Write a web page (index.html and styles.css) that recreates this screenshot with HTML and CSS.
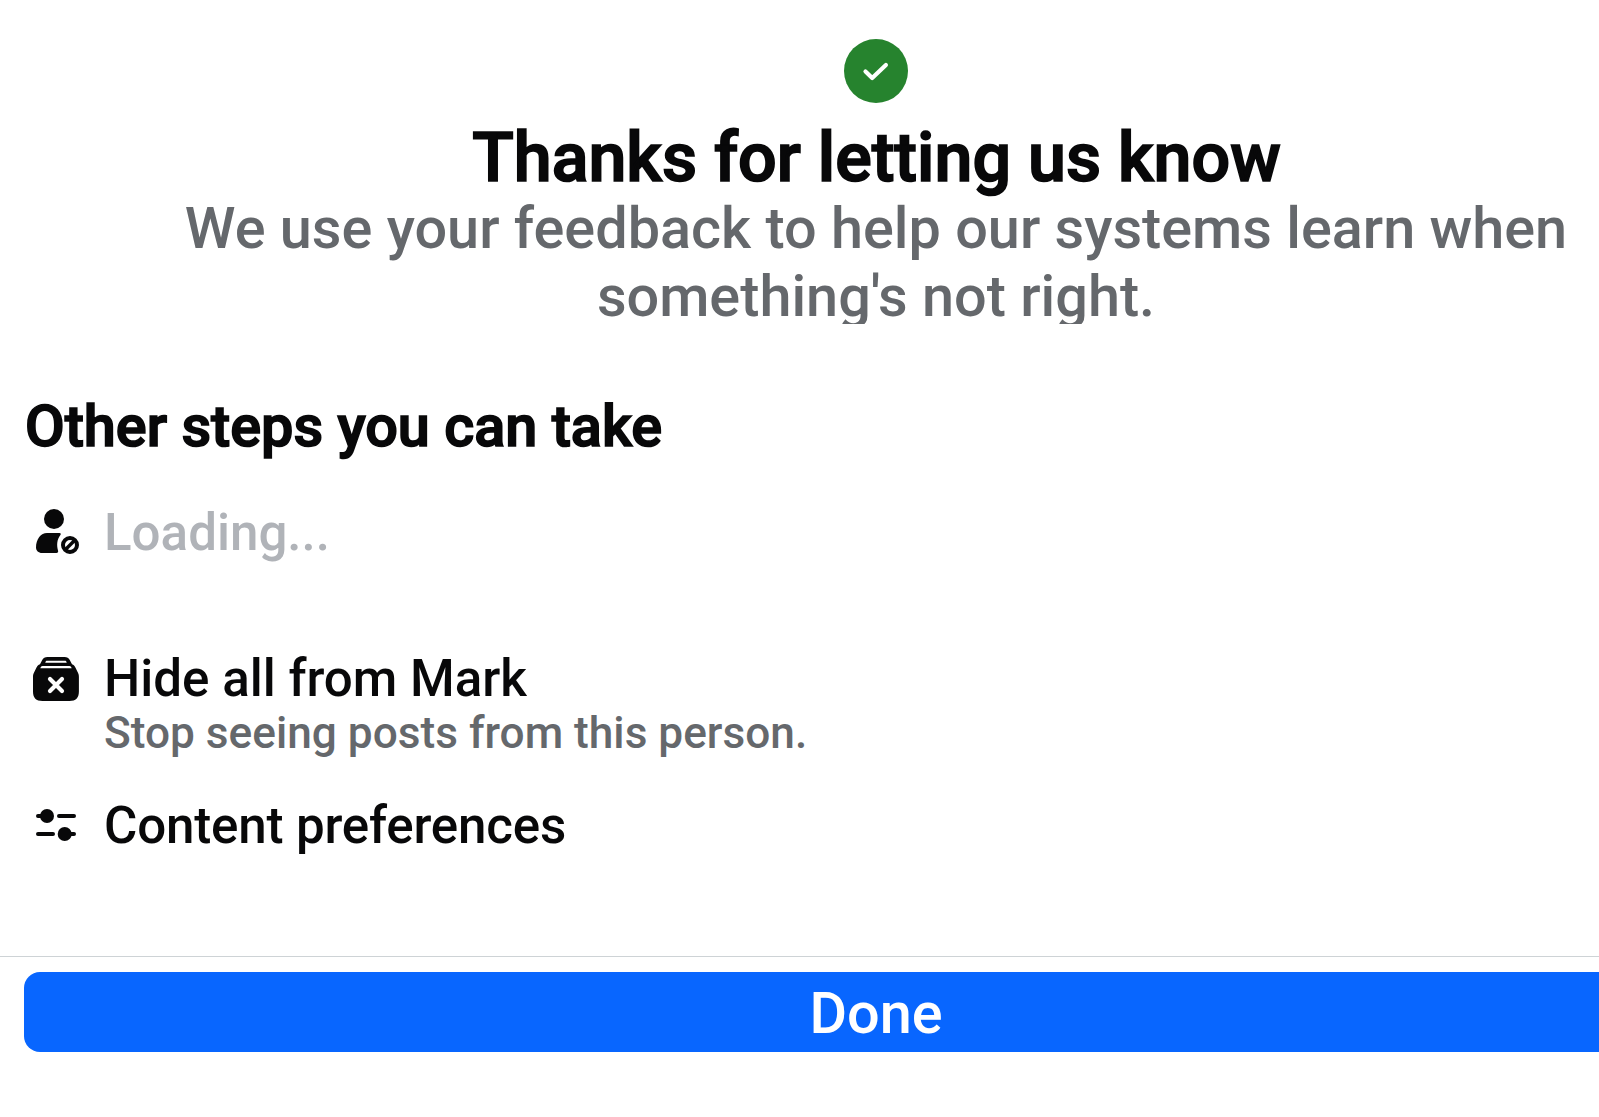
FILE: index.html
```html
<!DOCTYPE html>
<html lang="en">
<head>
<meta charset="utf-8">
<title>Thanks for letting us know</title>
<link rel="stylesheet" href="styles.css">
</head>
<body>
<main class="sheet">
  <header class="confirmation">
    <svg class="badge" viewBox="0 0 64 64" aria-hidden="true">
      <circle cx="32" cy="32" r="32" fill="#26832e"/>
      <path d="M21.500 32.500l6.700 6.500 13.700-13" fill="none" stroke="#fff" stroke-width="4.200" stroke-linecap="round" stroke-linejoin="round"/>
    </svg>
    <h1 class="title">Thanks for letting us know</h1>
    <p class="subtitle">We use your feedback to help our systems learn when<br>something's not right.</p>
  </header>
  <section class="steps">
    <h2 class="heading">Other steps you can take</h2>
    <div class="row">
      <svg class="icon" viewBox="0 0 48 48" aria-hidden="true">
        <circle cx="22" cy="11" r="10"/>
        <path d="M15 25H27.500c1.400 0 1.600 1 .9 2C25 31.500 24.500 36.500 26 42.500c.5 1.500-.1 2.500-1.600 2.500H10C6.500 45 4 42.500 4 39.500C4 31 9 25 15 25z"/>
        <circle cx="38" cy="37" r="7" fill="none" stroke="currentColor" stroke-width="4"/>
        <path d="M34 41l8-8" stroke="currentColor" stroke-width="3.400"/>
      </svg>
      <div class="label label-muted">Loading...</div>
    </div>
    <div class="row row-hide">
      <svg class="icon" viewBox="0 0 48 48" aria-hidden="true">
        <path d="M15.500 2h17c2.500 0 4.300 1 5.400 3.200L40 9.300c1.700.5 2.700 1.700 3.400 3.300l2.200 4.400c.9 1.600 1.300 3 1.300 5v14.500c0 6.500-3 9.500-9.500 9.500H10.500C4 46 1 43 1 36.500V22c0-2 .4-3.400 1.300-5l2.200-4.400C5.200 11 6.300 9.800 8 9.300l2.100-4.100C11.200 3 13 2 15.500 2z"/>
        <path d="M15 5.800h18c.9 0 1.400.5 1.700 1.900H13.300c.3-1.400.8-1.900 1.700-1.900zM10.500 11h27c1 0 1.700.7 2.200 2.300H8.300c.5-1.600 1.200-2.300 2.200-2.300z" fill="#fff"/>
        <path d="M18 24l12 12M30 24l-12 12" stroke="#fff" stroke-width="4.200" stroke-linecap="round"/>
      </svg>
      <div>
        <div class="label">Hide all from Mark</div>
        <div class="note">Stop seeing posts from this person.</div>
      </div>
    </div>
    <div class="row">
      <svg class="icon" viewBox="0 0 48 48" aria-hidden="true">
        <path d="M6 15h9M27 15h15M6 33h15M33 33h9" stroke="currentColor" stroke-width="4" stroke-linecap="round"/>
        <circle cx="15" cy="15" r="7"/>
        <circle cx="32.700" cy="33" r="7"/>
      </svg>
      <div class="label label-tight">Content preferences</div>
    </div>
  </section>
  <footer class="footer">
    <button class="done" type="button">Done</button>
  </footer>
</main>
</body>
</html>
```
FILE: styles.css
```css
html {
  overflow: hidden;
}

body {
  margin: 0;
  background: #fff;
  color: #080809;
  font-family: Roboto, "Liberation Sans", sans-serif;
  font-weight: 500;
}

.sheet {
  display: flex;
  flex-direction: column;
  box-sizing: border-box;
  width: 1752px;
  height: 1117px;
  padding-top: 39px;
  overflow: hidden;
}

.confirmation {
  display: flex;
  flex-direction: column;
  align-items: center;
  text-align: center;
}

.badge {
  width: 64px;
  height: 64px;
}

.title {
  margin: 18px 0 0;
  padding-left: 1px;
  font-size: 68.2px;
  font-weight: 500;
  line-height: 74px;
  -webkit-text-stroke: 1.7px currentColor;
}

.subtitle {
  height: 129px;
  overflow: hidden;
  margin: 0;
  color: #65686c;
  font-size: 57.6px;
  line-height: 68px;
  white-space: nowrap;
}

.steps {
  display: flex;
  flex-direction: column;
  box-sizing: border-box;
  height: 632px;
  padding: 69px 24px 0;
}

.heading {
  margin: 0 0 42px;
  padding-left: 1px;
  font-size: 57.6px;
  font-weight: 500;
  line-height: 68px;
  -webkit-text-stroke: 1.6px currentColor;
}

.row {
  display: flex;
  gap: 24px;
  height: 146px;
  padding-left: 8px;
}

.icon {
  flex: none;
  width: 48px;
  height: 48px;
  margin-top: 5px;
  fill: currentColor;
}

.row-hide {
  height: 147px;
}

.row-hide .icon {
  margin-top: 6px;
}

.label {
  font-size: 51.1px;
  line-height: 60px;
}

.label-muted {
  color: #b0b3b8;
}

.label-tight {
  letter-spacing: -0.18px;
}

.note {
  margin-top: -2px;
  color: #65686c;
  font-size: 44.2px;
  line-height: 52px;
}

.footer {
  padding: 15px 24px 0;
  border-top: 1px solid #ced3d6;
}

.done {
  display: block;
  width: 100%;
  height: 80px;
  padding: 4px 0 0;
  border: 0;
  border-radius: 16px;
  background: #0866ff;
  color: #fff;
  font: inherit;
  font-size: 57.6px;
  line-height: 76px;
}
```
